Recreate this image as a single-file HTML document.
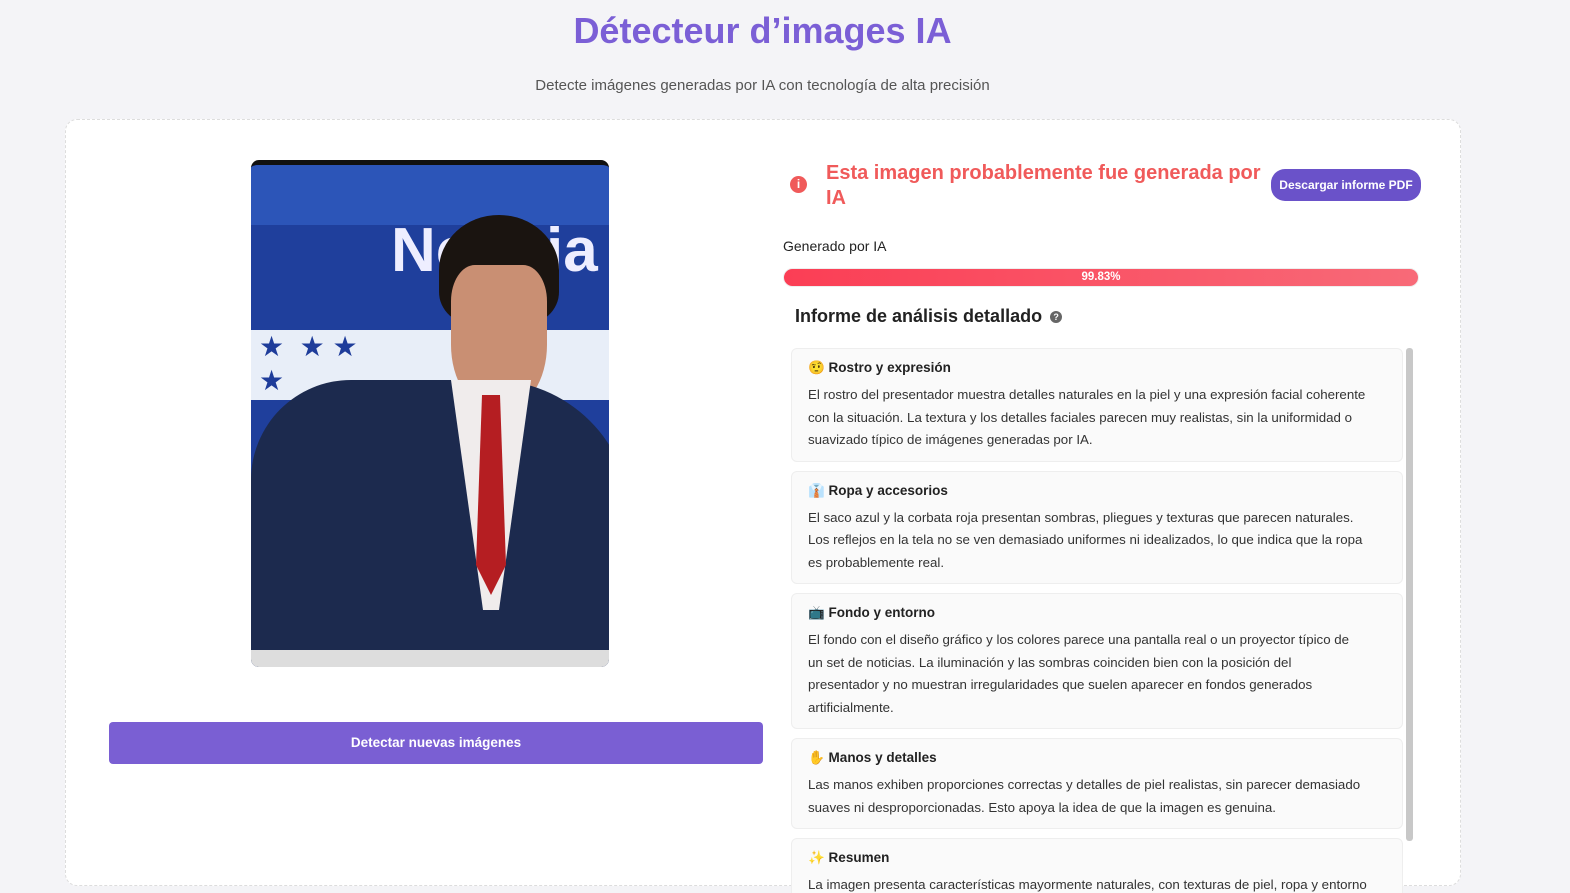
<!DOCTYPE html>
<html><head><meta charset="utf-8">
<style>
*{margin:0;padding:0;box-sizing:border-box}
body{width:1570px;height:893px;overflow:hidden;background:#f4f4f7;font-family:"Liberation Sans",sans-serif;position:relative;color:#333}
.title{position:absolute;top:10px;left:0;width:1525px;text-align:center;font-size:36px;font-weight:bold;color:#7b5fd6}
.sub{position:absolute;top:77px;left:0;width:1525px;text-align:center;font-size:15px;color:#555}
.card{position:absolute;left:65px;top:119px;width:1396px;height:767px;background:#fff;border:1px dashed #ddd;border-radius:12px}
.img{position:absolute;left:251px;top:160px;width:358px;height:507px;border-radius:8px;overflow:hidden;background:#1f3f9c;border-top:5px solid #111}
.btn{position:absolute;left:109px;top:722px;width:654px;height:42px;background:#7a5fd3;border-radius:4px;color:#fff;font-weight:bold;font-size:13.5px;text-align:center;line-height:42px}
.alert{position:absolute;left:790px;top:176px;width:17px;height:17px;border-radius:50%;background:#f05a5a;color:#fff;font-size:12px;font-weight:bold;text-align:center;line-height:17px}
.ah{position:absolute;left:826px;top:161px;font-size:20px;font-weight:bold;color:#f05a5a;line-height:25px}
.pdf{position:absolute;left:1271px;top:169px;width:150px;height:32px;border-radius:14px;background:#6a52c9;color:#fff;font-size:12px;font-weight:bold;text-align:center;line-height:32px}
.gen{position:absolute;left:783px;top:238px;font-size:14px;color:#222}
.bar{position:absolute;left:783px;top:268px;width:636px;height:19px;border-radius:10px;background:linear-gradient(90deg,#fb3e55,#f86a78);border:1px solid #eee;color:#fff;font-size:11.5px;font-weight:bold;text-align:center;line-height:17px}
.h2{position:absolute;left:795px;top:306px;font-size:18px;font-weight:bold;color:#222}
.q{display:inline-block;width:12px;height:12px;border-radius:50%;background:#666;color:#fff;font-size:9px;text-align:center;line-height:12px;vertical-align:middle;margin-left:8px}
.list{position:absolute;left:791px;top:348px;width:612px;height:545px;overflow:hidden}
.it{background:#fafafa;border:1px solid #eee;border-radius:6px;padding:9px 16px 9px;margin-bottom:9px}
.it b{display:block;font-size:13.5px;color:#222;line-height:20px;margin-bottom:6px}
.it p{font-size:13.3px;line-height:22.5px;color:#333;white-space:nowrap}
.sb{position:absolute;left:1406px;top:348px;width:7px;height:493px;background:#c8c8c8;border-radius:3px}
</style></head><body>
<div class="title">Détecteur d’images IA</div>
<div class="sub">Detecte imágenes generadas por IA con tecnología de alta precisión</div>
<div class="card"></div>
<div class="img">
 <div style="position:absolute;left:0;top:0;width:358px;height:60px;background:#2c55b8"></div>
 <div style="position:absolute;left:0;top:165px;width:358px;height:70px;background:#e8eef8"></div>
 <div style="position:absolute;left:0;top:335px;width:358px;height:145px;background:#2a4fae"></div>
 <div style="position:absolute;left:140px;top:50px;font-size:62px;font-weight:bold;color:#eef">Noticia</div>
 <div style="position:absolute;left:8px;top:165px;font-size:28px;color:#1e3c9a;line-height:34px">★ &nbsp;★ ★<br>★</div>
 <div style="position:absolute;left:188px;top:50px;width:120px;height:110px;background:#1a1410;border-radius:50% 50% 30% 30%"></div>
 <div style="position:absolute;left:200px;top:100px;width:96px;height:145px;background:#c98f73;border-radius:25% 25% 45% 45%"></div>
 <div style="position:absolute;left:0;top:215px;width:380px;height:300px;background:#1c2a4e;border-radius:100px 140px 0 0"></div>
 <div style="position:absolute;left:200px;top:215px;width:80px;height:230px;background:#f0ecec;clip-path:polygon(0 0,100% 0,60% 100%,40% 100%)"></div>
 <div style="position:absolute;left:225px;top:230px;width:30px;height:200px;background:#b51e22;clip-path:polygon(20% 0,80% 0,100% 85%,50% 100%,0 85%)"></div>
 <div style="position:absolute;left:0;top:485px;width:358px;height:22px;background:#ddd"></div>
</div>
<div class="btn">Detectar nuevas imágenes</div>
<div class="alert">i</div>
<div class="ah">Esta imagen probablemente fue generada por<br>IA</div>
<div class="pdf">Descargar informe PDF</div>
<div class="gen">Generado por IA</div>
<div class="bar">99.83%</div>
<div class="h2">Informe de análisis detallado<span class="q">?</span></div>
<div class="list">
<div class="it"><b>🤨 Rostro y expresión</b><p>El rostro del presentador muestra detalles naturales en la piel y una expresión facial coherente<br>con la situación. La textura y los detalles faciales parecen muy realistas, sin la uniformidad o<br>suavizado típico de imágenes generadas por IA.</p></div>
<div class="it"><b>👔 Ropa y accesorios</b><p>El saco azul y la corbata roja presentan sombras, pliegues y texturas que parecen naturales.<br>Los reflejos en la tela no se ven demasiado uniformes ni idealizados, lo que indica que la ropa<br>es probablemente real.</p></div>
<div class="it"><b>📺 Fondo y entorno</b><p>El fondo con el diseño gráfico y los colores parece una pantalla real o un proyector típico de<br>un set de noticias. La iluminación y las sombras coinciden bien con la posición del<br>presentador y no muestran irregularidades que suelen aparecer en fondos generados<br>artificialmente.</p></div>
<div class="it"><b>✋ Manos y detalles</b><p>Las manos exhiben proporciones correctas y detalles de piel realistas, sin parecer demasiado<br>suaves ni desproporcionadas. Esto apoya la idea de que la imagen es genuina.</p></div>
<div class="it"><b>✨ Resumen</b><p>La imagen presenta características mayormente naturales, con texturas de piel, ropa y entorno</p></div>
</div>
<div class="sb"></div>
</body></html>
